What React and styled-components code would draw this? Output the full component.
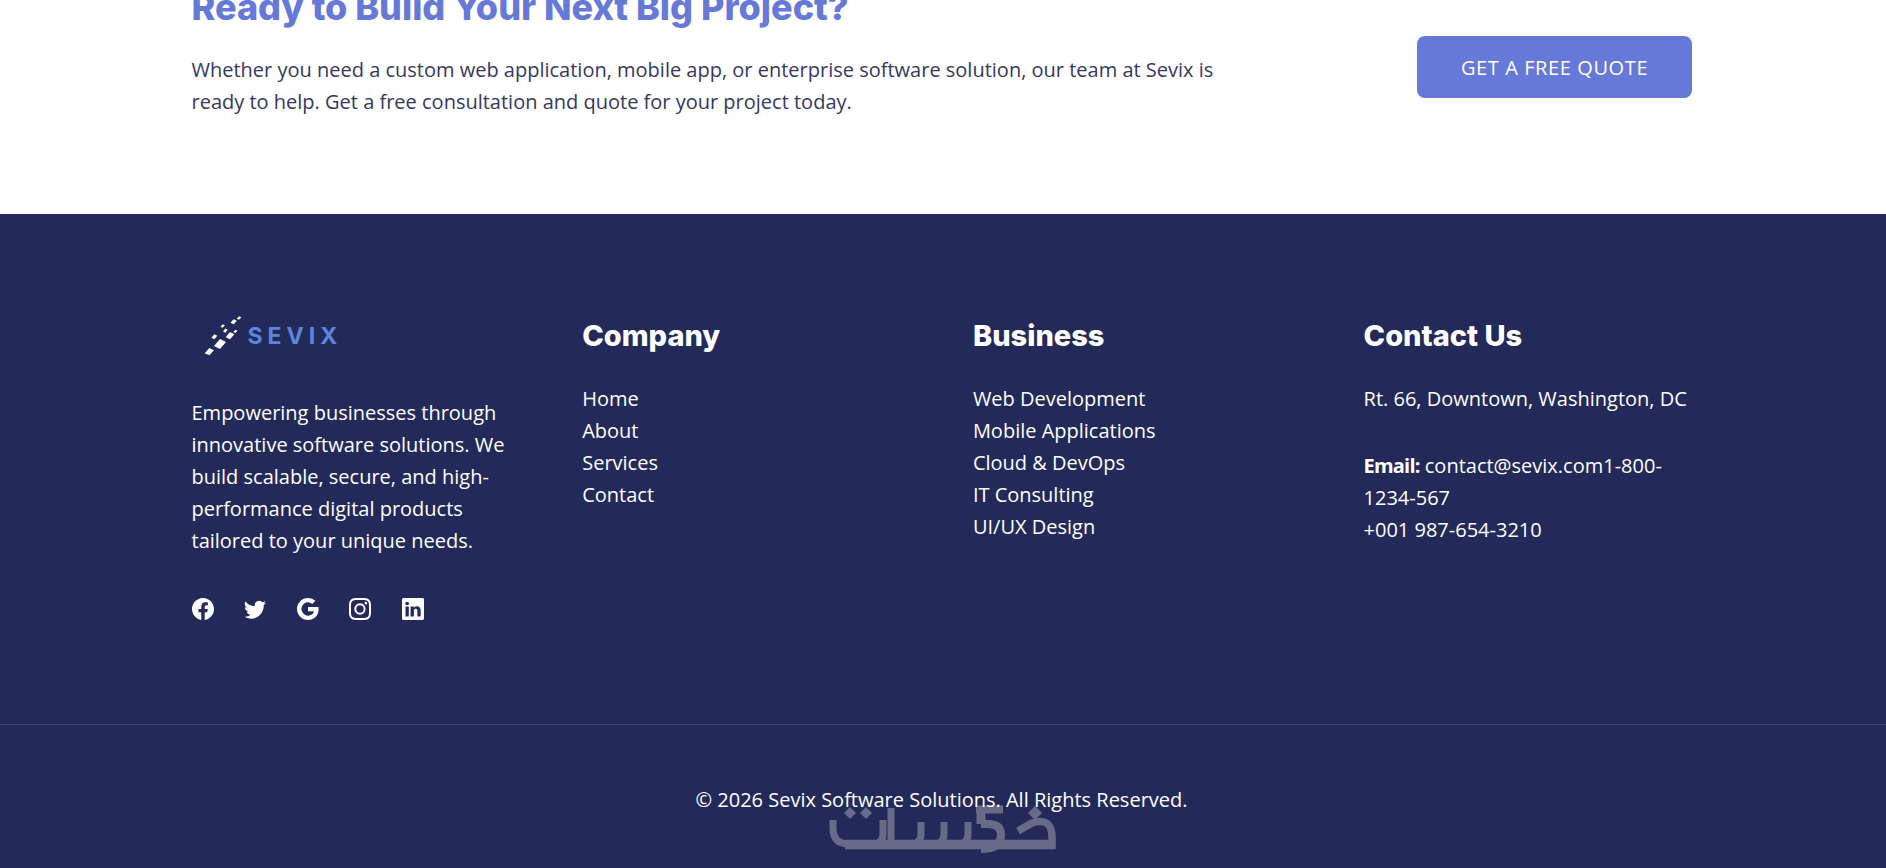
import React from 'react'
import styled, { createGlobalStyle } from 'styled-components'
import { BsFacebook, BsTwitter, BsGoogle, BsInstagram, BsLinkedin } from 'react-icons/bs'

const GlobalStyle = createGlobalStyle`
  html, body {
    margin: 0;
    height: 100%;
    overflow: hidden;
    background: #fff;
    font-family: "Open Sans", "Liberation Sans", sans-serif;
  }
`

const companyLinks = ['Home', 'About', 'Services', 'Contact']
const businessLinks = ['Web Development', 'Mobile Applications', 'Cloud & DevOps', 'IT Consulting', 'UI/UX Design']
const socials = [BsFacebook, BsTwitter, BsGoogle, BsInstagram, BsLinkedin]

// slanted squares of the logo mark: centre x, centre y, width, height
const markTiles = [
  [85, 153, 28, 22],
  [117, 130, 36, 30],
  [100, 108, 18, 15],
  [147, 105, 26, 22],
  [125, 76, 13, 11],
  [133, 90, 14, 13],
  [163, 92, 13, 10],
  [158, 63, 19, 15],
  [174, 52, 14, 11],
]

function SevixMark() {
  return (
    <svg width="44" height="44" viewBox="60 40 132 132">
      <g fill="#fff">
        {markTiles.map(([x, y, w, h]) => (
          <polygon
            key={`${x}-${y}`}
            points={`${x - w / 2},${y + h * 0.2} ${x},${y + h / 2} ${x + w / 2},${y - h * 0.2} ${x},${y - h / 2}`}
          />
        ))}
      </g>
    </svg>
  )
}

function Watermark() {
  return (
    <WatermarkBox>
      <svg width="240" height="56" viewBox="0 0 240 56" fill="none">
        <g stroke="#666b87" strokeWidth="7">
          <path d="M8 20v8q0 16 16 16h24q10 0 10-10V20" />
          <path d="M66 8v32" />
          <path d="M96 22v12q0 10-10 10" />
          <path d="M119 22v12q0 10-10 10" />
          <path d="M143 22v12q0 10-10 10" />
          <path strokeWidth="9.500" d="M20 44.500H230" />
          <path strokeWidth="8" d="M151 9.500h27" />
          <path strokeWidth="9" d="M156 6v18" />
          <path strokeWidth="8" d="M156 24h7q13 0 13 11q0 14-20 14" />
          <path strokeWidth="7.500" d="M193 31l14-8q20-6 20 14v12" />
        </g>
        <g fill="#666b87">
          <path d="M25 7l6 6-6 6-6-6z" />
          <path d="M41 7l6 6-6 6-6-6z" />
          <path d="M210 6l7 7-7 7-7-7z" />
        </g>
      </svg>
    </WatermarkBox>
  )
}

export default function App() {
  return (
    <Page>
      <GlobalStyle />
      <Cta>
        <CtaText>
          <CtaTitle>Ready to Build Your Next Big Project?</CtaTitle>
          <CtaBody>
            Whether you need a custom web application, mobile app, or enterprise software solution, our team at Sevix is ready to help. Get a free consultation and quote for your project today.
          </CtaBody>
        </CtaText>
        <QuoteButton>Get a Free Quote</QuoteButton>
      </Cta>
      <Footer>
        <FooterGrid>
          <Col>
            <Logo>
              <SevixMark />
              <LogoWord>SEVIX</LogoWord>
            </Logo>
            <About>
              Empowering businesses through innovative software solutions. We build scalable, secure, and high-performance digital products tailored to your unique needs.
            </About>
            <Socials>
              {socials.map((Icon, i) => (
                <SocialLink key={i}><Icon size={22} /></SocialLink>
              ))}
            </Socials>
          </Col>
          <Col>
            <ColTitle>Company</ColTitle>
            <LinkList>
              {companyLinks.map(l => <li key={l}>{l}</li>)}
            </LinkList>
          </Col>
          <Col>
            <ColTitle>Business</ColTitle>
            <LinkList>
              {businessLinks.map(l => <li key={l}>{l}</li>)}
            </LinkList>
          </Col>
          <Col>
            <ColTitle>Contact Us</ColTitle>
            <ContactText>Rt. 66, Downtown, Washington, DC</ContactText>
            <ContactText>
              <EmailLabel>Email:</EmailLabel> contact@sevix.com1-800-1234-567
              <br />
              +001 987-654-3210
            </ContactText>
          </Col>
        </FooterGrid>
        <Watermark />
        <Copyright>© 2026 Sevix Software Solutions. All Rights Reserved.</Copyright>
      </Footer>
    </Page>
  )
}

const Page = styled.div`
  height: 868px;
  overflow: hidden;
`

const Cta = styled.section`
  height: 214px;
  box-sizing: border-box;
  padding: 0 194px 0 191.500px;
  display: flex;
  justify-content: space-between;
  align-items: flex-start;
  background: #fff;
`

const CtaText = styled.div`
  width: 1040px;
`

const CtaTitle = styled.h2`
  margin: -18px 0 0;
  font-family: Inter, "Liberation Sans", sans-serif;
  font-size: 36px;
  line-height: 50px;
  font-weight: 800;
  color: #6779d8;
`

const CtaBody = styled.p`
  margin: 22px 0 0;
  font-size: 20px;
  line-height: 32px;
  color: #35385f;
`

const QuoteButton = styled.a`
  margin-top: 36px;
  width: 275px;
  height: 62px;
  display: flex;
  align-items: center;
  justify-content: center;
  border-radius: 8px;
  background: #6779d8;
  color: #fff;
  font-size: 20px;
  letter-spacing: 0.600px;
  text-transform: uppercase;
`

const Footer = styled.footer`
  position: relative;
  height: 654px;
  background: #232a5a;
  color: #fff;
  font-size: 20px;
  line-height: 32px;
`

const FooterGrid = styled.div`
  height: 511px;
  box-sizing: border-box;
  padding: 105px 191px 0 191.500px;
  display: grid;
  grid-template-columns: repeat(4, 330px);
  column-gap: 60.700px;
  border-bottom: 1px solid #434a78;
`

const Col = styled.div``

const Logo = styled.div`
  height: 44px;
  margin: -5px 0 0 9px;
  display: flex;
  align-items: center;
  gap: 3px;
`

const LogoWord = styled.span`
  font-family: Inter, "Liberation Sans", sans-serif;
  font-size: 23px;
  font-weight: 700;
  letter-spacing: 5px;
  color: #5b85dc;
`

const About = styled.p`
  margin: 39px 0 0;
`

const Socials = styled.div`
  margin-top: 41px;
  display: flex;
  gap: 30.600px;
`

const SocialLink = styled.a`
  display: flex;
  color: #fff;
`

const ColTitle = styled.h3`
  margin: 0 0 30px;
  font-family: Inter, "Liberation Sans", sans-serif;
  font-size: 29px;
  line-height: 34px;
  font-weight: 800;
`

const LinkList = styled.ul`
  margin: 0;
  padding: 0;
  list-style: none;
`

const ContactText = styled.p`
  margin: 0 0 35px;
`

const EmailLabel = styled.strong`
  letter-spacing: -0.800px;
`

const Copyright = styled.div`
  position: relative;
  padding: 59px 3px 0 0;
  text-align: center;
`

const WatermarkBox = styled.div`
  position: absolute;
  left: 825px;
  bottom: 12px;
  height: 56px;
  pointer-events: none;
`
